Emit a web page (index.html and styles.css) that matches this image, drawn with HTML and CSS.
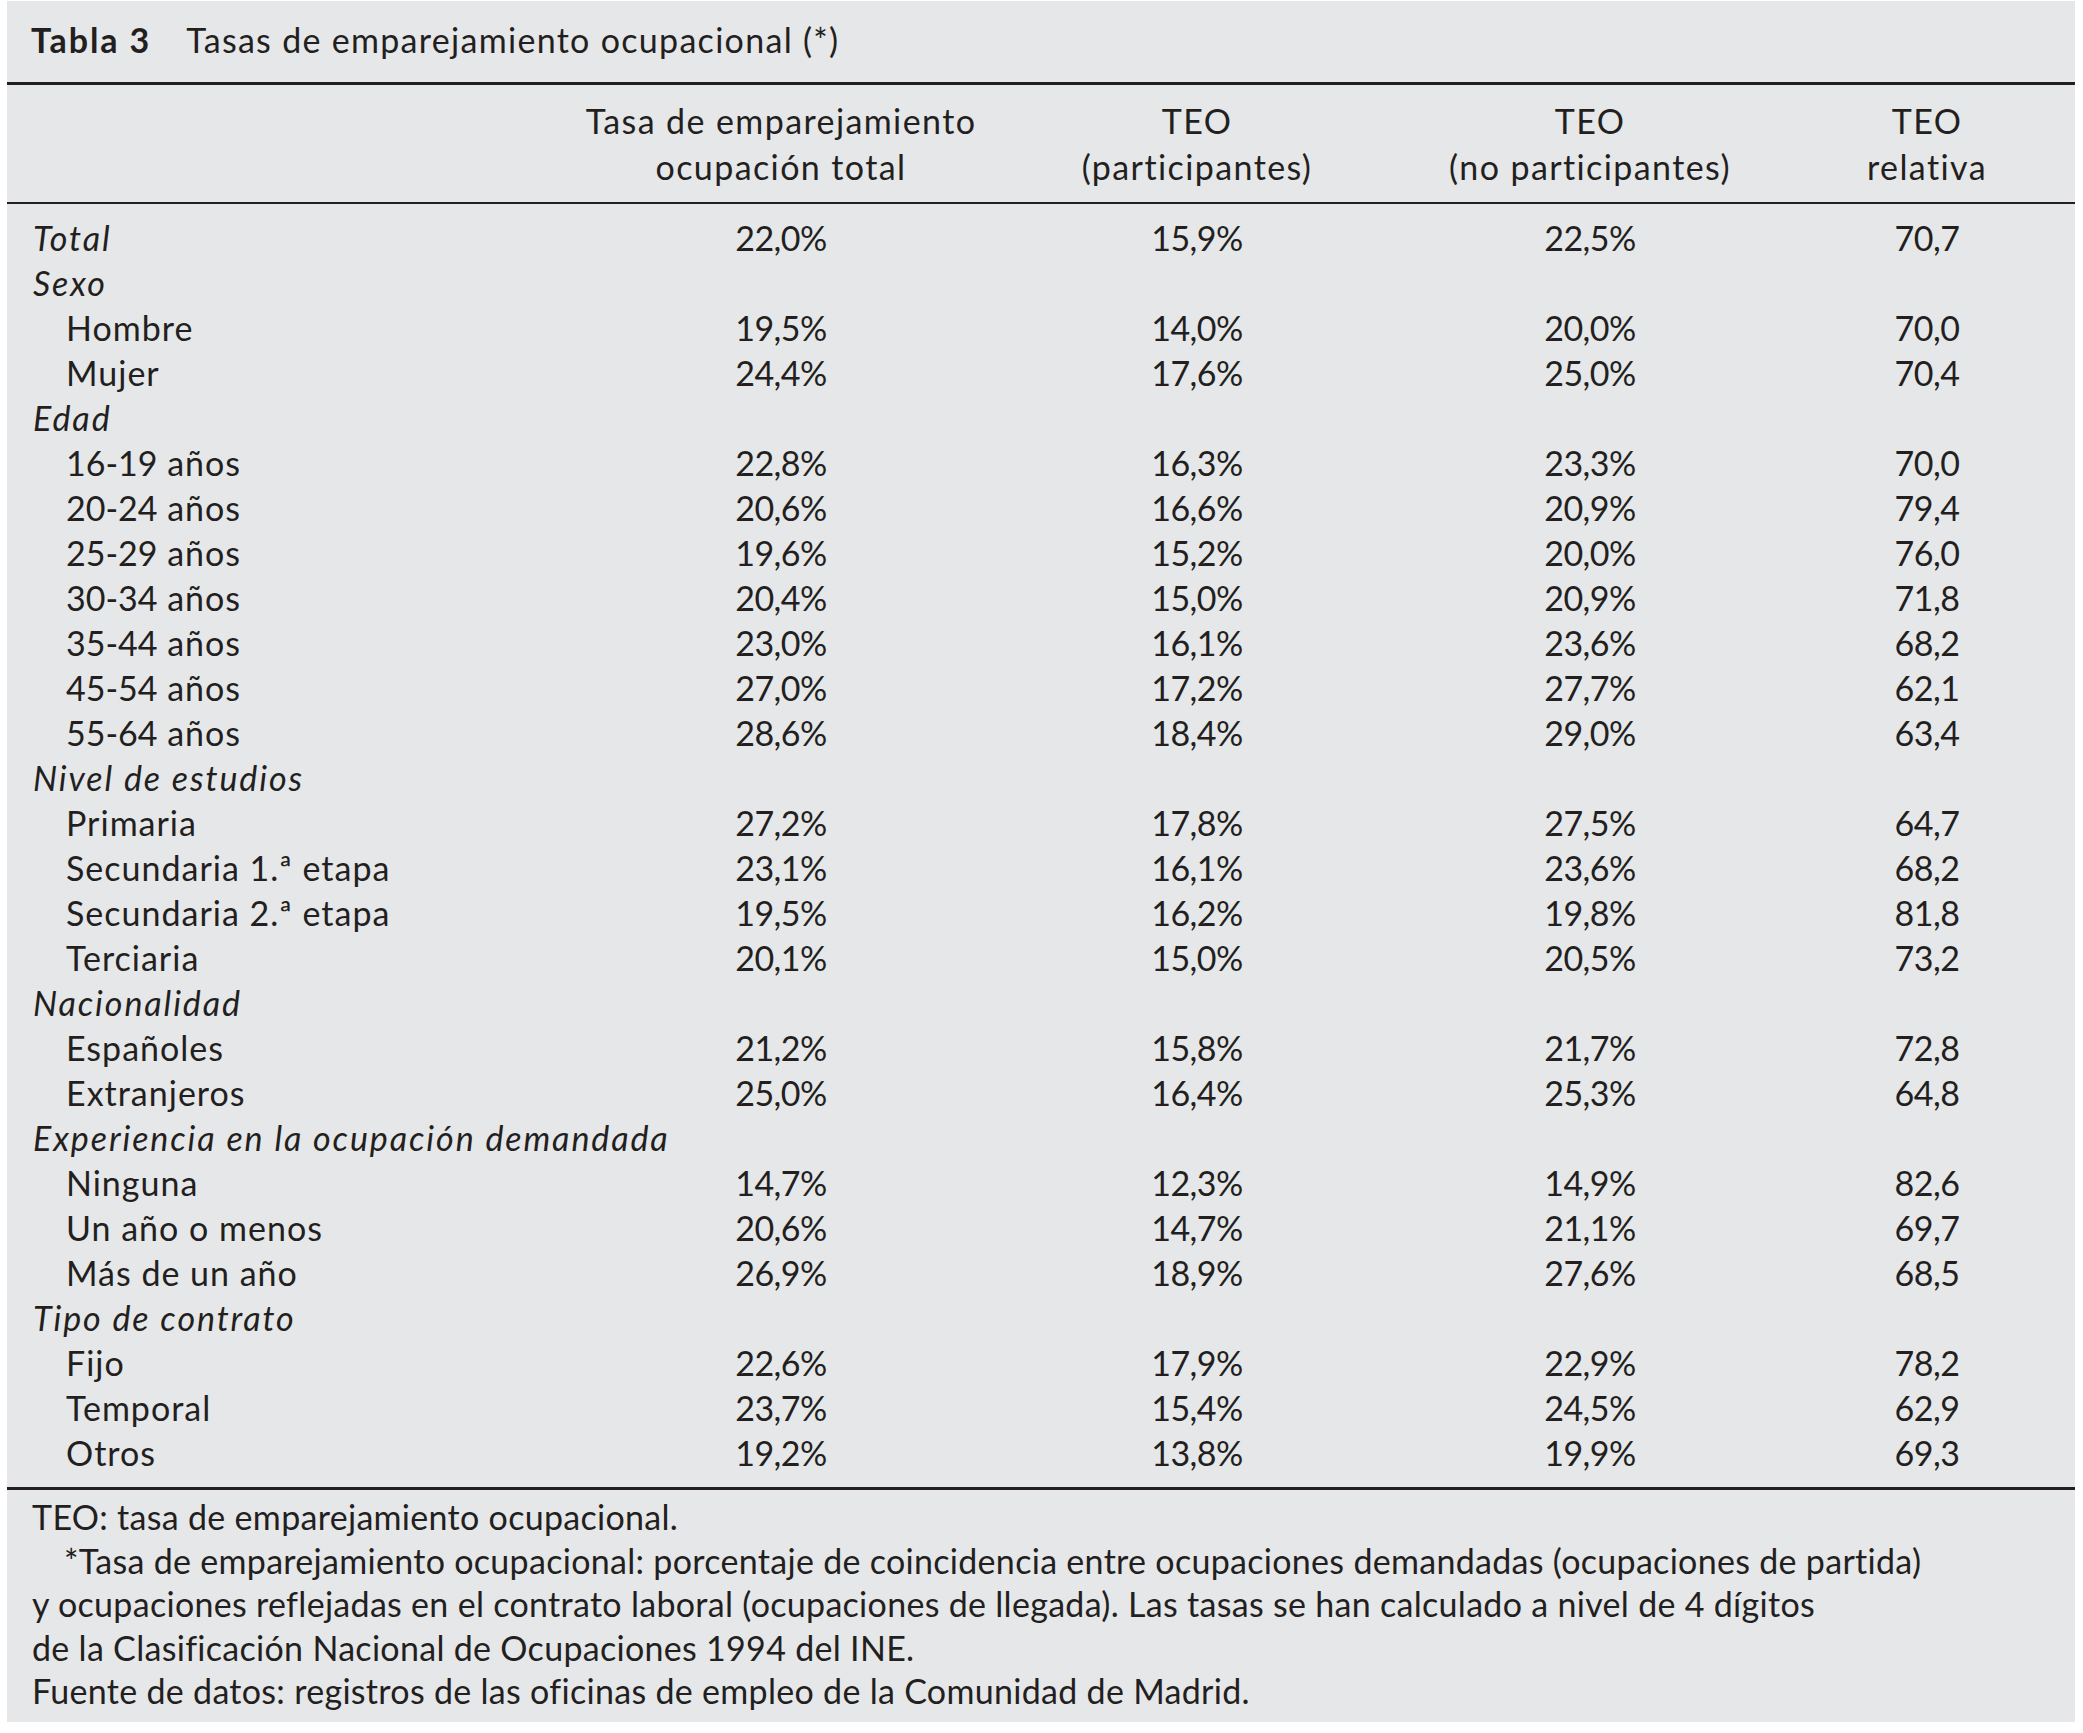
FILE: index.html
```html
<!DOCTYPE html>
<html lang="es">
<head>
<meta charset="utf-8">
<title>Tabla 3</title>
<link rel="stylesheet" href="styles.css">
</head>
<body>
<div class="panel">
  <div class="caption"><span class="num">Tabla 3</span><span class="ttl">Tasas de emparejamiento ocupacional (*)</span></div>
  <table class="data">
    <colgroup>
      <col class="c-label"><col class="c1"><col class="c2"><col class="c3"><col class="c4">
    </colgroup>
    <thead>
      <tr>
        <th></th>
        <th>Tasa de emparejamiento<br>ocupación total</th>
        <th>TEO<br>(participantes)</th>
        <th>TEO<br>(no participantes)</th>
        <th class="last">TEO<br>relativa</th>
      </tr>
    </thead>
    <tbody>
      <tr class="first"><td class="grp">Total</td><td>22,0%</td><td>15,9%</td><td>22,5%</td><td class="last">70,7</td></tr>
      <tr><td class="grp">Sexo</td><td></td><td></td><td></td><td class="last"></td></tr>
      <tr><td class="sub">Hombre</td><td>19,5%</td><td>14,0%</td><td>20,0%</td><td class="last">70,0</td></tr>
      <tr><td class="sub">Mujer</td><td>24,4%</td><td>17,6%</td><td>25,0%</td><td class="last">70,4</td></tr>
      <tr><td class="grp">Edad</td><td></td><td></td><td></td><td class="last"></td></tr>
      <tr><td class="sub"><span class="dig">16-19</span> años</td><td>22,8%</td><td>16,3%</td><td>23,3%</td><td class="last">70,0</td></tr>
      <tr><td class="sub"><span class="dig">20-24</span> años</td><td>20,6%</td><td>16,6%</td><td>20,9%</td><td class="last">79,4</td></tr>
      <tr><td class="sub"><span class="dig">25-29</span> años</td><td>19,6%</td><td>15,2%</td><td>20,0%</td><td class="last">76,0</td></tr>
      <tr><td class="sub"><span class="dig">30-34</span> años</td><td>20,4%</td><td>15,0%</td><td>20,9%</td><td class="last">71,8</td></tr>
      <tr><td class="sub"><span class="dig">35-44</span> años</td><td>23,0%</td><td>16,1%</td><td>23,6%</td><td class="last">68,2</td></tr>
      <tr><td class="sub"><span class="dig">45-54</span> años</td><td>27,0%</td><td>17,2%</td><td>27,7%</td><td class="last">62,1</td></tr>
      <tr><td class="sub"><span class="dig">55-64</span> años</td><td>28,6%</td><td>18,4%</td><td>29,0%</td><td class="last">63,4</td></tr>
      <tr><td class="grp">Nivel de estudios</td><td></td><td></td><td></td><td class="last"></td></tr>
      <tr><td class="sub">Primaria</td><td>27,2%</td><td>17,8%</td><td>27,5%</td><td class="last">64,7</td></tr>
      <tr><td class="sub">Secundaria 1.ª etapa</td><td>23,1%</td><td>16,1%</td><td>23,6%</td><td class="last">68,2</td></tr>
      <tr><td class="sub">Secundaria 2.ª etapa</td><td>19,5%</td><td>16,2%</td><td>19,8%</td><td class="last">81,8</td></tr>
      <tr><td class="sub">Terciaria</td><td>20,1%</td><td>15,0%</td><td>20,5%</td><td class="last">73,2</td></tr>
      <tr><td class="grp">Nacionalidad</td><td></td><td></td><td></td><td class="last"></td></tr>
      <tr><td class="sub">Españoles</td><td>21,2%</td><td>15,8%</td><td>21,7%</td><td class="last">72,8</td></tr>
      <tr><td class="sub">Extranjeros</td><td>25,0%</td><td>16,4%</td><td>25,3%</td><td class="last">64,8</td></tr>
      <tr><td class="grp">Experiencia en la ocupación demandada</td><td></td><td></td><td></td><td class="last"></td></tr>
      <tr><td class="sub">Ninguna</td><td>14,7%</td><td>12,3%</td><td>14,9%</td><td class="last">82,6</td></tr>
      <tr><td class="sub">Un año o menos</td><td>20,6%</td><td>14,7%</td><td>21,1%</td><td class="last">69,7</td></tr>
      <tr><td class="sub">Más de un año</td><td>26,9%</td><td>18,9%</td><td>27,6%</td><td class="last">68,5</td></tr>
      <tr><td class="grp">Tipo de contrato</td><td></td><td></td><td></td><td class="last"></td></tr>
      <tr><td class="sub">Fijo</td><td>22,6%</td><td>17,9%</td><td>22,9%</td><td class="last">78,2</td></tr>
      <tr><td class="sub">Temporal</td><td>23,7%</td><td>15,4%</td><td>24,5%</td><td class="last">62,9</td></tr>
      <tr class="final"><td class="sub">Otros</td><td>19,2%</td><td>13,8%</td><td>19,9%</td><td class="last">69,3</td></tr>
    </tbody>
  </table>
  <div class="notes">
    <p>TEO: tasa de emparejamiento ocupacional.</p>
    <p class="indent">*Tasa de emparejamiento ocupacional: porcentaje de coincidencia entre ocupaciones demandadas (ocupaciones de partida)<br>y ocupaciones reflejadas en el contrato laboral (ocupaciones de llegada). Las tasas se han calculado a nivel de 4 dígitos<br>de la Clasificación Nacional de Ocupaciones 1994 del INE.</p>
    <p>Fuente de datos: registros de las oficinas de empleo de la Comunidad de Madrid.</p>
  </div>
</div>
</body>
</html>
```

FILE: styles.css
```css
html, body {
  margin: 0;
  padding: 0;
  background: #ffffff;
}

body {
  font-family: Lato, "Open Sans", "Liberation Sans", sans-serif;
  color: #231f20;
  font-size: 34px;
}

.panel {
  margin-left: 7px;
  margin-top: 1px;
  width: 2068px;
  height: 1721px;
  background: #e6e7e9;
  box-sizing: border-box;
  padding-top: 16px;
}

.caption {
  padding-left: 24px;
  line-height: 46px;
  height: 65px;
  letter-spacing: 1.3px;
}

.caption .num {
  font-weight: 700;
  letter-spacing: 1.9px;
  margin-right: 35px;
}

.data {
  width: 100%;
  border-collapse: collapse;
  table-layout: fixed;
  border-top: 3px solid #231f20;
  border-bottom: 3px solid #231f20;
}

.c-label { width: 553px; }
.c1 { width: 442px; }
.c2 { width: 390px; }
.c3 { width: 396px; }
.c4 { width: 287px; }

.data th {
  font-weight: 400;
  text-align: center;
  line-height: 46px;
  padding: 13px 0 12px;
  letter-spacing: 1.4px;
  border-bottom: 2px solid #231f20;
}

.data td {
  line-height: 45px;
  height: 45px;
  padding: 0;
  text-align: center;
  white-space: nowrap;
  letter-spacing: -0.5px;
}

.data th.last,
.data td.last {
  padding-right: 9px;
}

.data tr.first td { padding-top: 11px; }
.data tr.final td { padding-bottom: 12px; }

.data td.grp {
  text-align: left;
  font-style: italic;
  letter-spacing: 1.9px;
  padding-left: 26px;
}

.data td.sub {
  text-align: left;
  letter-spacing: 1px;
  padding-left: 59px;
}

.data td.sub .dig {
  letter-spacing: 0;
}

.notes {
  padding: 5px 0 0 25px;
  line-height: 43.5px;
  letter-spacing: 0.3px;
}

.notes p {
  margin: 0;
}

.notes .indent {
  text-indent: 32px;
}
```
